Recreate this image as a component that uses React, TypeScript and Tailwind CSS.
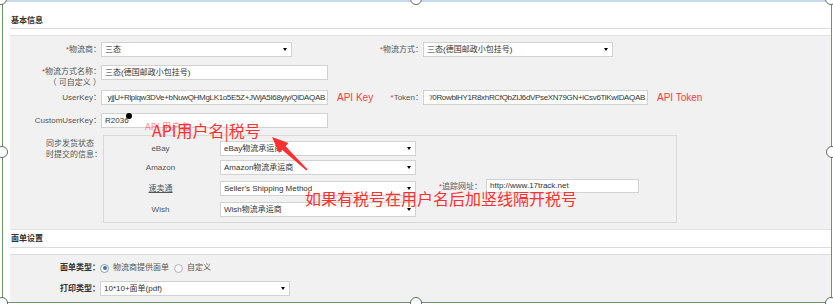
import React from "react";

function Arrow() {
  return (
    <span className="w-0 h-0 shrink-0 border-l-[2.5px] border-r-[2.5px] border-t-[3px] border-l-transparent border-r-transparent border-t-black" />
  );
}

function Select({ w, text }: { w: string; text: string }) {
  return (
    <div
      className={`${w} h-[15px] shrink-0 bg-white border border-[#d2d2d2] flex items-center justify-between pl-[3px] pr-[4px] text-[#333] whitespace-nowrap overflow-hidden`}
    >
      <span>{text}</span>
      <Arrow />
    </div>
  );
}

function Input({ w, text, end, h = "h-[15px]" }: { w: string; text: string; end?: boolean; h?: string }) {
  return (
    <div
      className={`${w} ${h} shrink-0 bg-white border border-[#d2d2d2] flex items-center ${end ? "justify-end pr-[2px] tracking-[-0.33px]" : "pl-[3px]"} text-[#333] whitespace-nowrap overflow-hidden`}
    >
      <span className="shrink-0">{text}</span>
    </div>
  );
}

function Star() {
  return <span className="text-[#e33]">*</span>;
}

export default function App() {
  return (
    <div className="relative w-[833px] h-[304px] overflow-hidden bg-white font-[family-name:'Liberation_Sans','Noto_Sans_CJK_SC',sans-serif] text-[8px] leading-[12px] text-[#555]">
      <div className="h-[2px] bg-[#c9d8ef]" />
      <div className="ml-[2px] w-[830px] h-[301px] border-l border-r border-b border-[#70906f] flex flex-col">
        <div className="ml-[7px] h-[27px] pt-[13px] pl-[1px] border-b border-[#dcdcdc] font-bold text-[#333]">基本信息</div>

        <div className="mt-[6px] ml-[7px] bg-[#f1f1f1] border-t border-b border-[#e3e3e3] pt-[6px] pb-[6px]">
          {/* row 1 */}
          <div className="flex items-center h-[15px]">
            <div className="w-[91px] shrink-0 text-right"><Star />物流商：</div>
            <Select w="w-[191px]" text="三态" />
            <div className="w-[131px] shrink-0 text-right"><Star />物流方式：</div>
            <Select w="w-[190px]" text="三态(德国邮政小包挂号)" />
          </div>
          {/* row 2 */}
          <div className="mt-[8px] flex items-start h-[15px]">
            <div className="w-[91px] shrink-0 text-right leading-[11px] pt-[1px]">
              <div><Star />物流方式名称：</div>
              <div>（ 可自定义 ）</div>
            </div>
            <Input w="w-[227px]" text="三态(德国邮政小包挂号)" />
          </div>
          {/* row 3 */}
          <div className="mt-[10px] flex items-center h-[15px]">
            <div className="w-[91px] shrink-0 text-right">UserKey：</div>
            <div className="w-[231px] shrink-0 flex items-center">
              <Input w="w-[227px]" text="yjjU+Rlplqw3DVe+bNuwQHMgLK1o5E5Z+JWjA5I68yiy/QlDAQAB" end />
              <span className="ml-[9px] shrink-0 whitespace-nowrap text-[10px] text-[#ff3b3b]">API Key</span>
            </div>
            <div className="w-[91px] shrink-0 text-right"><Star />Token：</div>
            <Input w="w-[225px]" text="'/0RowblHY1R8xhRCfQbZIJ6dVPseXN79GN+iCsv6TiKwIDAQAB" end />
            <span className="ml-[9px] shrink-0 whitespace-nowrap text-[10px] text-[#ff3b3b]">API Token</span>
          </div>
          {/* row 4 */}
          <div className="mt-[8px] flex items-center h-[15px]">
            <div className="w-[91px] shrink-0 text-right">CustomUserKey：</div>
            <Input w="w-[227px]" text="R2036" />
          </div>
          {/* sync block */}
          <div className="mt-[7px] flex items-start">
            <div className="w-[91px] shrink-0 pl-[36px] leading-[11px] pt-[3px] whitespace-nowrap">
              <div>同步发货状态</div>
              <div>时提交的信息：</div>
            </div>
            <div className="ml-[2px] w-[574px] h-[88px] border border-[#d9d9d9] pt-[5px]">
              <div className="flex items-center h-[15px]">
                <div className="w-[113px] text-center">eBay</div>
                <div className="ml-[3px]"><Select w="w-[196px]" text="eBay物流承运商" /></div>
              </div>
              <div className="mt-[4px] flex items-center h-[15px]">
                <div className="w-[113px] text-center">Amazon</div>
                <div className="ml-[3px]"><Select w="w-[196px]" text="Amazon物流承运商" /></div>
              </div>
              <div className="mt-[4px] flex items-start">
                <div className="w-[113px] h-[15px] mt-[2px] flex items-center justify-center"><span className="underline">速卖通</span></div>
                <div className="ml-[3px] mt-[2px]"><Select w="w-[196px]" text="Seller's Shipping Method" /></div>
                <div className="w-[66px] h-[14px] pt-[2px] flex items-center justify-end whitespace-nowrap"><Star />追踪网址：</div>
                <div className="ml-[4px]"><Input w="w-[153px]" h="h-[14px]" text="http://www.17track.net" /></div>
              </div>
              <div className="mt-[6px] flex items-center h-[15px]">
                <div className="w-[113px] text-center">Wish</div>
                <div className="ml-[3px]"><Select w="w-[196px]" text="Wish物流承运商" /></div>
              </div>
            </div>
          </div>
        </div>

        <div className="ml-[7px] h-[18px] pt-[3px] pl-[1px] border-b border-[#dcdcdc] font-bold text-[#333]">面单设置</div>

        <div className="mt-[6px] ml-[7px] flex-1 bg-[#f1f1f1] border-t border-[#dcdcdc] pt-[7px]">
          <div className="flex items-center h-[12px]">
            <div className="w-[90px] shrink-0 text-right font-bold text-[#333]">面单类型：</div>
            <span className="w-[9px] h-[9px] rounded-full border border-[#9a9a9a] bg-white flex items-center justify-center">
              <span className="w-[4px] h-[4px] rounded-full bg-[#2f7bbf]" />
            </span>
            <span className="ml-[4px]">物流商提供面单</span>
            <span className="ml-[5px] w-[9px] h-[9px] rounded-full border border-[#b5b5b5] bg-[#f7f7f7]" />
            <span className="ml-[4px]">自定义</span>
          </div>
          <div className="mt-[7px] flex items-center h-[15px]">
            <div className="w-[90px] shrink-0 text-right font-bold text-[#333]">打印类型：</div>
            <Select w="w-[190px]" text="10*10+面单(pdf)" />
          </div>
        </div>
      </div>

      {/* annotations */}
      <div className="absolute left-[126px] top-[113px] w-[6px] h-[6px] rounded-full bg-black" />
      <div className="absolute left-[145px] top-[121px] text-[9.5px] leading-[10px] text-[#ff4a4a] opacity-60 whitespace-nowrap font-[family-name:'Noto_Sans_CJK_SC',sans-serif]">API 用户名</div>
      <div className="absolute left-[152px] top-[122px] text-[16px] leading-[16px] text-[#ff3030] whitespace-nowrap font-[family-name:'Noto_Sans_CJK_SC',sans-serif]">API用户名|税号</div>
      <div className="absolute left-[305px] top-[190px] text-[16px] leading-[16px] text-[#ff3030] whitespace-nowrap font-[family-name:'Noto_Sans_CJK_SC',sans-serif]">如果有税号在用户名后加竖线隔开税号</div>

      <svg className="absolute left-0 top-0 pointer-events-none" width="833" height="304" viewBox="0 0 833 304">
        <polygon
          points="272,137 288.5,143 285.6,146.3 307.6,169.6 306.4,170.4 282,149.8 279,153"
          fill="#ff3030"
        />
        {[
          [1, -1],
          [416, -1],
          [831, -1],
          [2, 152],
          [832, 152],
          [2, 303],
          [416, 303],
          [831, 303],
        ].map(([cx, cy], i) => (
          <circle key={i} cx={cx} cy={cy} r={5.5} fill="white" stroke="#5f6f5f" strokeWidth={1} />
        ))}
      </svg>
    </div>
  );
}
